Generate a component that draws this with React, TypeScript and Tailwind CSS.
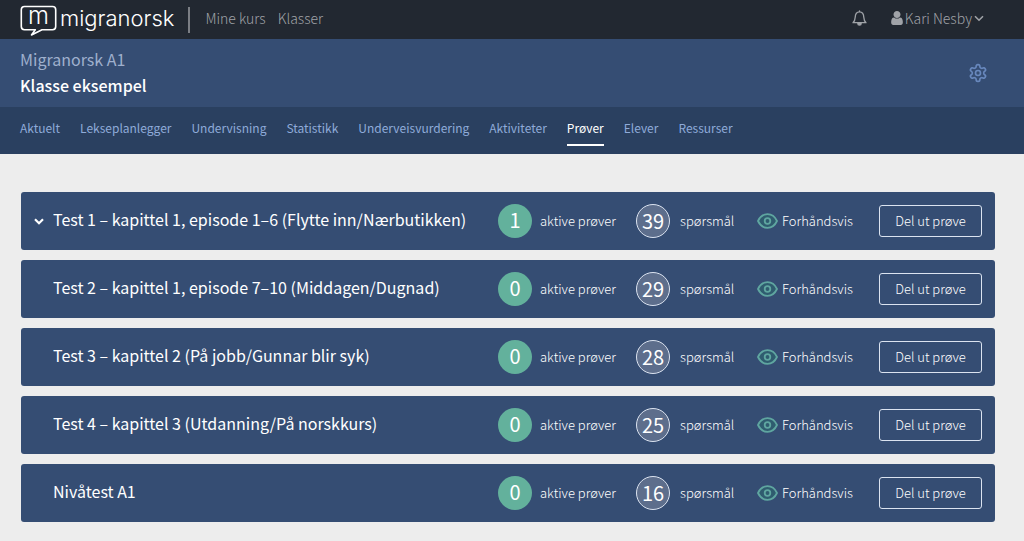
import React from "react";
import { LuSettings } from "react-icons/lu";

interface Test {
  title: string;
  active: number;
  questions: number;
  expandable?: boolean;
}

const tests: Test[] = [
  {
    title: "Test 1 – kapittel 1, episode 1–6 (Flytte inn/Nærbutikken)",
    active: 1,
    questions: 39,
    expandable: true,
  },
  {
    title: "Test 2 – kapittel 1, episode 7–10 (Middagen/Dugnad)",
    active: 0,
    questions: 29,
  },
  {
    title: "Test 3 – kapittel 2 (På jobb/Gunnar blir syk)",
    active: 0,
    questions: 28,
  },
  {
    title: "Test 4 – kapittel 3 (Utdanning/På norskkurs)",
    active: 0,
    questions: 25,
  },
  { title: "Nivåtest A1", active: 0, questions: 16 },
];

const tabs = [
  "Aktuelt",
  "Lekseplanlegger",
  "Undervisning",
  "Statistikk",
  "Underveisvurdering",
  "Aktiviteter",
  "Prøver",
  "Elever",
  "Ressurser",
];

const Logo: React.FC = () => (
  <a
    href="#"
    aria-label="migranorsk"
    className="flex items-center font-['Inter',sans-serif] text-white"
  >
    <svg
      className="overflow-visible"
      width="37"
      height="33"
      viewBox="0 0 37 33"
      fill="none"
      aria-hidden="true"
    >
      <path
        d="M4.500 3.500h28a3.200 3.200 0 0 1 3.200 3.200v16.800a3.200 3.200 0 0 1-3.200 3.200H22l-10.500 5.300 3.800-5.300H4.500a3.200 3.200 0 0 1-3.200-3.200V6.700a3.200 3.200 0 0 1 3.200-3.200z"
        stroke="currentColor"
        strokeWidth="1.6"
        strokeLinejoin="round"
      />
      <text x="18.500" y="21" textAnchor="middle" fontSize="24" fill="currentColor">
        m
      </text>
    </svg>
    <span className="pb-1 pl-[3px] text-[22px] leading-6">migranorsk</span>
  </a>
);

const BellIcon: React.FC = () => (
  <svg
    width="15"
    height="16"
    viewBox="0 0 15 16"
    fill="none"
    stroke="currentColor"
    strokeWidth="1.3"
    strokeLinejoin="round"
    strokeLinecap="round"
    aria-hidden="true"
  >
    <path d="M7.500 .8v1M1 12.700h13c-1.700-1.500-2.100-2.600-2.200-5.400C11.700 4 10.300 1.900 7.500 1.900S3.300 4 3.200 7.300C3.100 10.100 2.700 11.200 1 12.700z" />
    <path d="M5.800 13.400a1.700 1.700 0 0 0 3.400 0z" fill="currentColor" />
  </svg>
);

const UserIcon: React.FC = () => (
  <svg
    className="h-[14px] w-3"
    viewBox="256 128 1280 1536"
    fill="currentColor"
    aria-hidden="true"
  >
    <path d="M1536 1399q0 109-62.500 187t-150.500 78h-854q-88 0-150.500-78t-62.500-187q0-85 8.500-160.500t31.500-152 58.500-131 94-89 134.500-34.500q131 128 313 128t313-128q76 0 134.500 34.500t94 89 58.500 131 31.500 152 8.500 160.500zm-256-887q0 159-112.500 271.500t-271.500 112.500-271.500-112.500-112.500-271.500 112.500-271.500 271.500-112.500 271.500 112.500 112.500 271.500z" />
  </svg>
);

const Chevron: React.FC<{ className?: string; strokeWidth: number }> = ({
  className,
  strokeWidth,
}) => (
  <svg
    className={className}
    viewBox="0 0 10 7"
    fill="none"
    stroke="currentColor"
    strokeWidth={strokeWidth}
    aria-hidden="true"
  >
    <path d="M1 1.200l4 4 4-4" />
  </svg>
);

const EyeIcon: React.FC = () => (
  <svg width="21" height="16" viewBox="0 0 21 16" fill="none" aria-hidden="true">
    <path
      d="M1 8C3 3.800 6.400 1.200 10.500 1.200S18 3.800 20 8c-2 4.200-5.400 6.800-9.500 6.800S3 12.200 1 8z"
      fill="#2f5c6f"
      stroke="#5fa6a0"
      strokeWidth="1.8"
      strokeLinejoin="round"
    />
    <circle cx="10.500" cy="8" r="2.800" stroke="#5fa6a0" strokeWidth="1.800" />
  </svg>
);

const TestRow: React.FC<{ test: Test }> = ({ test }) => (
  <li className="flex h-[58px] items-center rounded-[3px] bg-[#354d73] pr-[13px] text-white">
    <div className="flex w-8 shrink-0 justify-center">
      {test.expandable && (
        <button type="button" aria-label="Vis detaljer" className="pl-1">
          <Chevron className="h-[7px] w-[10px]" strokeWidth={2.2} />
        </button>
      )}
    </div>
    <h2 className="min-w-0 flex-1 truncate pb-1 text-base leading-6">
      {test.title}
    </h2>
    <div className="grid shrink-0 grid-cols-[138px_121px_122px_103px] items-center text-[13px] font-light">
      <div className="flex items-center gap-2">
        <span className="flex size-[34px] items-center justify-center rounded-full bg-[#63b19c] pb-[2px] text-xl leading-6 font-normal">
          {test.active}
        </span>
        <span>aktive prøver</span>
      </div>
      <div className="flex items-center gap-[10px]">
        <span className="flex size-[34px] items-center justify-center rounded-full border border-[#dbe3f0] bg-[#5d6e8c] text-xl leading-6 font-normal">
          {test.questions}
        </span>
        <span>spørsmål</span>
      </div>
      <a href="#" className="flex items-center gap-1">
        <EyeIcon />
        Forhåndsvis
      </a>
      <button
        type="button"
        className="h-8 rounded-[3px] border border-[#dbe3f0] leading-5"
      >
        Del ut prøve
      </button>
    </div>
  </li>
);

const App: React.FC = () => {
  return (
    <div className="min-h-screen bg-[#ededed] font-['Noto_Sans_CJK_JP',sans-serif]">
      <header className="flex h-[39px] items-center justify-between bg-[#222831] pr-10 pl-5 text-sm font-light text-[#a0a3a8]">
        <div className="flex items-center">
          <Logo />
          <nav className="ml-[14px] flex h-[26px] items-center gap-3 border-l-2 border-[#7b7e84] pb-1 pl-[15px]">
            <a href="#">Mine kurs</a>
            <a href="#">Klasser</a>
          </nav>
        </div>
        <div className="flex items-center gap-6 pb-[3px]">
          <button type="button" aria-label="Varsler">
            <BellIcon />
          </button>
          <button type="button" className="flex items-center gap-[2px]">
            <UserIcon />
            Kari Nesby
            <Chevron className="h-[7px] w-[10px]" strokeWidth={1.6} />
          </button>
        </div>
      </header>

      <div className="flex h-[68px] items-center justify-between bg-[#354d73] pr-9 pl-5">
        <div className="pb-[2px] text-base leading-[26px]">
          <p className="text-[#9fb0cd]">Migranorsk A1</p>
          <h1 className="font-medium text-white">Klasse eksempel</h1>
        </div>
        <button type="button" aria-label="Innstillinger" className="text-[#6888bd]">
          <LuSettings className="size-5" />
        </button>
      </div>

      <nav className="flex h-[47px] gap-5 bg-[#2a4060] px-5 text-xs leading-5 text-[#8fabd9]">
        {tabs.map((tab) => (
          <a
            key={tab}
            href="#"
            aria-current={tab === "Prøver" ? "page" : undefined}
            className={
              tab === "Prøver"
                ? "mb-2 border-b-2 border-white pt-[11px] text-white"
                : "mb-2 pt-[11px]"
            }
          >
            {tab}
          </a>
        ))}
      </nav>

      <main className="pt-[38px] pr-[29px] pb-5 pl-[21px]">
        <ul className="flex flex-col gap-[10px]">
          {tests.map((test) => (
            <TestRow key={test.title} test={test} />
          ))}
        </ul>
      </main>
    </div>
  );
};

export default App;
